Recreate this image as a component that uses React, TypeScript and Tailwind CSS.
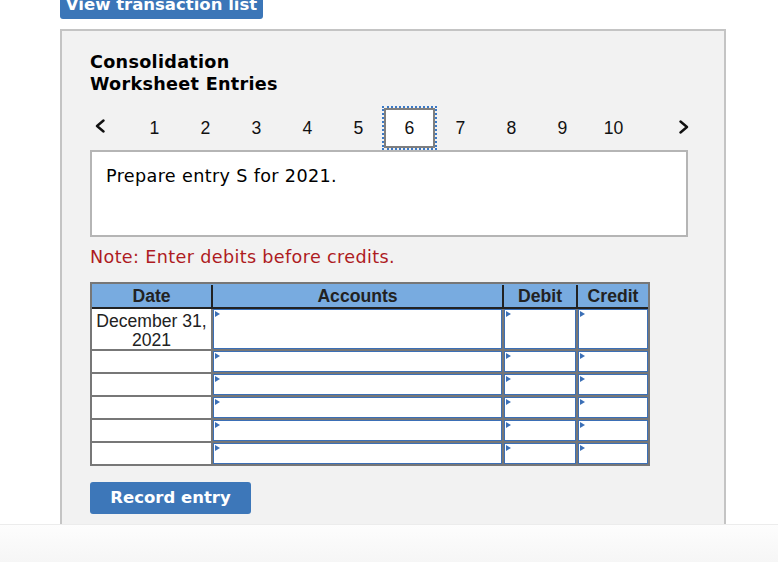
import React from "react";

const verdana = { fontFamily: '"DejaVu Sans", Verdana, sans-serif' };
const arial = { fontFamily: '"Liberation Sans", Arial, sans-serif' };

function Triangle() {
  return (
    <span className="absolute left-[1px] top-[1px] h-0 w-0 border-y-[3px] border-l-[5px] border-y-transparent border-l-[#3b6fb6]" />
  );
}

function EntryCell({ className }: { className: string }) {
  return (
    <div className={`${className} h-full`}>
      <div className="relative h-full w-full border border-[#3b6fb6] bg-white">
        <Triangle />
      </div>
    </div>
  );
}

function Row({ first, date }: { first?: boolean; date?: boolean }) {
  return (
    <div
      className={`flex ${first ? "h-[40px]" : "h-[23px] border-t-2 border-[#777]"}`}
    >
      <div className="w-[121px] border-r-2 border-[#777] bg-white pt-[3px] text-center text-[17.6px] leading-[19px] text-[#222]" style={arial}>
        {date ? (
          <>
            December 31,
            <br />
            2021
          </>
        ) : null}
      </div>
      <EntryCell className="w-[291px] border-r-2 border-[#777]" />
      <EntryCell className="w-[74px] border-r-2 border-[#777]" />
      <EntryCell className="flex-1" />
    </div>
  );
}

function Chevron({ dir }: { dir: "left" | "right" }) {
  return (
    <svg width="12" height="14" viewBox="0 0 12 14" fill="none">
      {dir === "left" ? (
        <path d="M9.5 1.5 L3 7 L9.5 12.5" stroke="#111" strokeWidth="2.4" strokeLinecap="round" strokeLinejoin="round" />
      ) : (
        <path d="M2.5 1.5 L9 7 L2.5 12.5" stroke="#111" strokeWidth="2.4" strokeLinecap="round" strokeLinejoin="round" />
      )}
    </svg>
  );
}

export default function App() {
  const pages = [1, 2, 3, 4, 5, 6, 7, 8, 9, 10];
  return (
    <div className="relative h-[562px] w-full overflow-hidden bg-white">
      <div className="pl-[60px]">
        <div
          className="flex h-[19px] w-[203px] items-end justify-center rounded-b-[3px] bg-[#3b76b8] pb-[4px] text-[16.5px] font-bold leading-[20px] text-white"
          style={verdana}
        >
          <span className="whitespace-nowrap">View transaction list</span>
        </div>

        <div className="mt-[10px] h-[560px] w-[666px] border-2 border-[#c4c4c4] bg-[#f2f2f2] pl-[28px] pt-[20px]">
          <div className="text-[17.6px] font-bold leading-[22px] tracking-[0.3px] text-black" style={verdana}>
            Consolidation
            <br />
            Worksheet Entries
          </div>

          <div className="mt-[11px] flex h-[44px] w-[600px] items-center" style={arial}>
            <div className="flex w-[39px] items-center pl-[4px] pb-[4px]">
              <Chevron dir="left" />
            </div>
            {pages.map((p) =>
              p === 6 ? (
                <div key={p} className="flex h-[40px] w-[51px] items-center justify-center border-2 border-[#7f7f7f] bg-white pt-[1px] text-[17.6px] text-[#111] outline-2 outline-dotted outline-[#3b79c6]">
                  {p}
                </div>
              ) : (
                <div key={p} className="flex h-[40px] w-[51px] items-center justify-center pt-[1px] text-[17.6px] text-[#111]">
                  {p}
                </div>
              )
            )}
            <div className="ml-auto flex items-center pb-[2px]">
              <Chevron dir="right" />
            </div>
          </div>

          <div className="h-[87px] w-[598px] border-2 border-[#b5b5b5] bg-white pl-[14px] pt-[13px] text-[17.6px] leading-[22px] tracking-[0.35px] text-black" style={verdana}>
            Prepare entry S for 2021.
          </div>

          <div className="mt-[9px] h-[22px] text-[17.6px] leading-[22px] tracking-[0.35px] text-[#ae1b22]" style={verdana}>
            Note: Enter debits before credits.
          </div>

          <div className="mt-[14px] w-[560px] border-2 border-[#777]">
            <div className="flex h-[25px] border-b-2 border-[#222] bg-[#78abe0] pt-[1px] text-[17.6px] font-bold leading-[23px] text-[#222]" style={arial}>
              <div className="w-[121px] border-r-2 border-[#222] text-center">Date</div>
              <div className="w-[291px] border-r-2 border-[#222] text-center">Accounts</div>
              <div className="w-[74px] border-r-2 border-[#222] text-center">Debit</div>
              <div className="flex-1 text-center">Credit</div>
            </div>
            <Row first date />
            <Row />
            <Row />
            <Row />
            <Row />
            <Row />
          </div>

          <button
            className="mt-[16px] flex h-[32px] w-[161px] items-center justify-center rounded-[3px] bg-[#3d77b9] pt-[1px] text-[16.5px] font-bold text-white"
            style={verdana}
          >
            Record entry
          </button>
        </div>
      </div>

      <div className="fixed bottom-0 left-0 right-0 h-[38px] border-t border-[#ececec] bg-gradient-to-b from-[#fdfdfd] to-[#f6f6f6]" />
    </div>
  );
}
